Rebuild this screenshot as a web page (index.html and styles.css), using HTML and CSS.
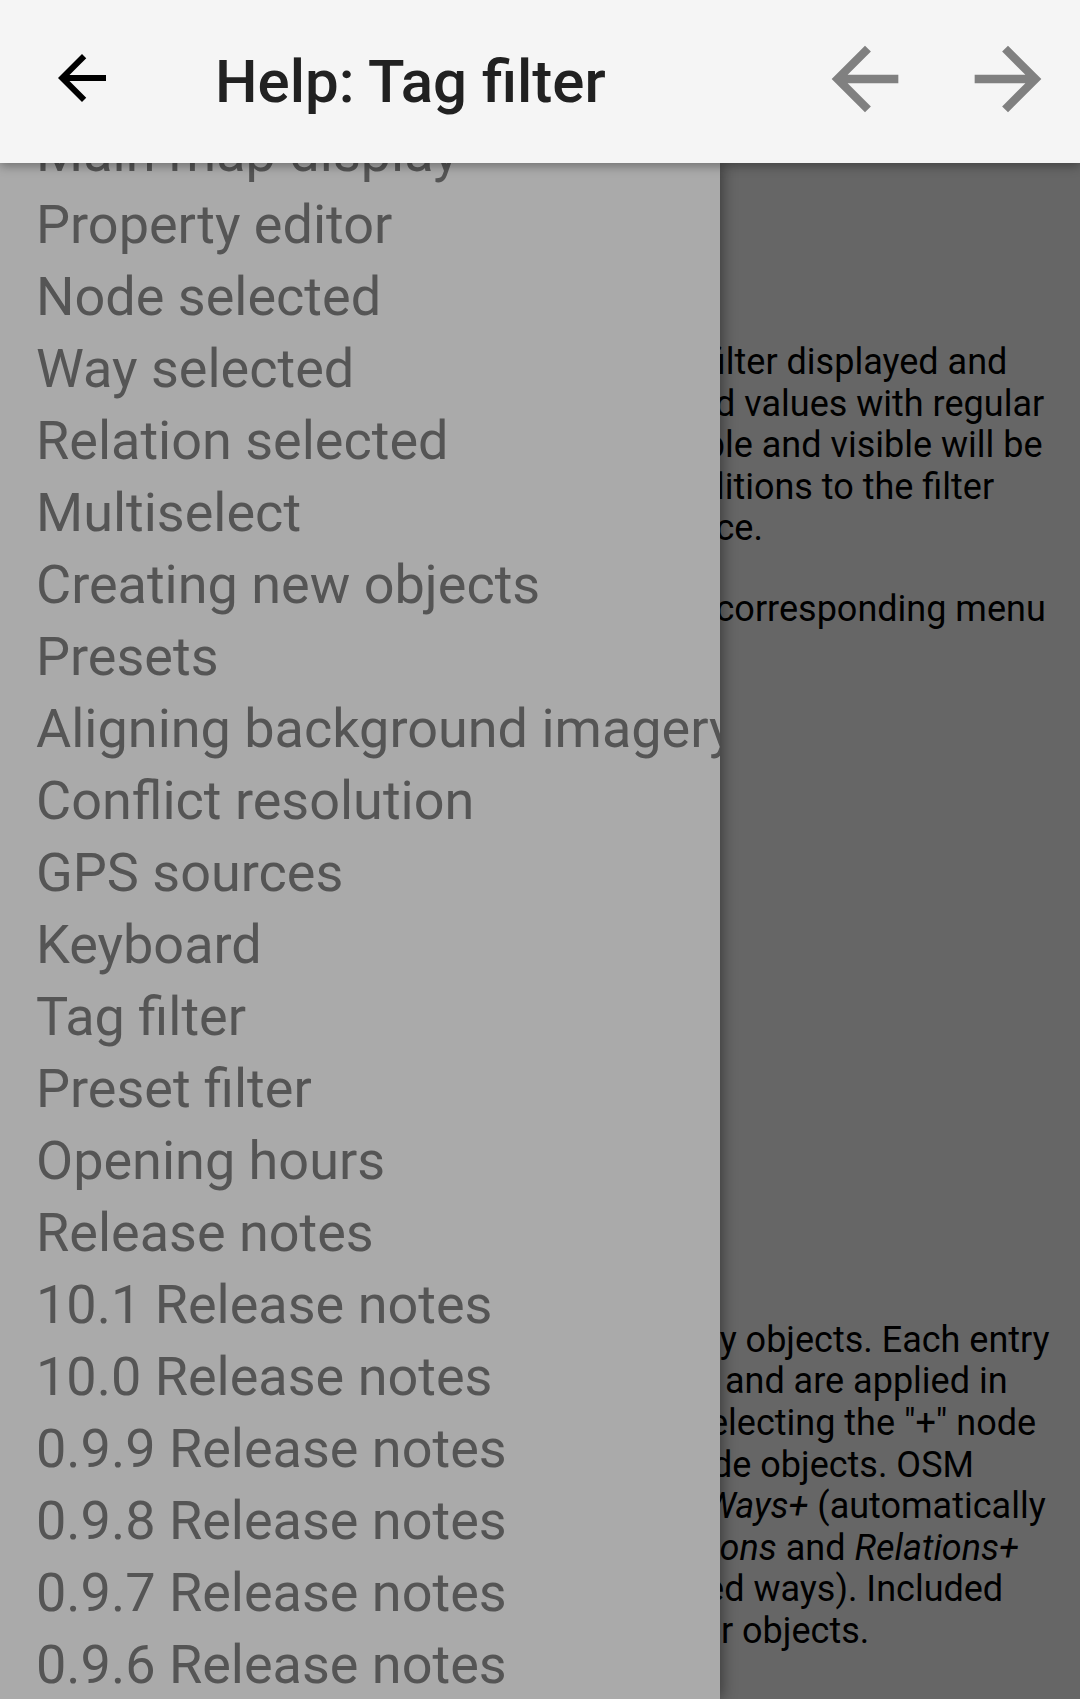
FILE: index.html
```html
<!DOCTYPE html>
<html lang="en">
<head>
<meta charset="utf-8">
<title>Help: Tag filter</title>
<link rel="stylesheet" href="styles.css">
</head>
<body>
<div class="app">
  <header class="toolbar">
    <button class="icon-btn back" aria-label="Back">
      <svg viewBox="0 0 24 24" width="72" height="72"><path d="M20 11H7.83l5.59-5.59L12 4l-8 8 8 8 1.41-1.41L7.83 13H20v-2z"/></svg>
    </button>
    <h1 class="title">Help: Tag filter</h1>
    <div class="actions">
      <button class="icon-btn nav" aria-label="Previous">
        <svg viewBox="0 0 24 24" width="100" height="100"><path d="M20 11H7.83l5.59-5.59L12 4l-8 8 8 8 1.41-1.41L7.83 13H20v-2z"/></svg>
      </button>
      <button class="icon-btn nav" aria-label="Next">
        <svg viewBox="0 0 24 24" width="100" height="100"><path d="M12 4l-1.41 1.41L16.17 11H4v2h12.17l-5.58 5.59L12 20l8-8z"/></svg>
      </button>
    </div>
  </header>

  <main class="help">
    <h2 class="help-title">Tag filter</h2>
    <p>The tag filter is a simplistic mechanism to filter displayed and<br>editable objects, via matching their keys and values with regular<br>expressions. Only objects being both editable and visible will be<br>shown and can be edited. Changes and additions to the filter<br>will be reflected in the map display all at once.</p>
    <p>The filter can be turned on and off with the corresponding menu<br>entry.</p>
    <h3 class="help-sub">Filter editor</h3>
    <ul class="short-list">
      <li>Include or exclude</li>
      <li>Object type</li>
      <li>Key expression</li>
      <li>Value expression</li>
      <li>Active toggle</li>
      <li>Delete entry</li>
      <li>Add entry</li>
      <li>Reorder entries</li>
      <li>Clear filter</li>
      <li>Save filter</li>
      <li>Load filter</li>
      <li>Close editor</li>
    </ul>
    <p>The filter entries may include, or exclude any objects. Each entry<br>matches key and value regular expressions and are applied in<br>the listed order, new entries are added by selecting the "+" node<br>icon, the type filter restricts matching to node objects. OSM<br>element types accepted are: <em>Nodes</em>, <em>Ways</em>, <em>Ways+</em> (automatically<br>including all of the nodes of the way), <em>Relations</em> and <em>Relations+</em><br>(including all its member nodes and included ways). Included<br>objects are visible, excluded ones hide other objects.</p>
    <p class="note">Note that the filter is only applied to the loaded and downloaded data.</p>
  </main>

  <div class="scrim"></div>

  <nav class="drawer">
    <ul class="topics">
      <li>Main map display</li>
      <li>Property editor</li>
      <li>Node selected</li>
      <li>Way selected</li>
      <li>Relation selected</li>
      <li>Multiselect</li>
      <li>Creating new objects</li>
      <li>Presets</li>
      <li>Aligning background imagery</li>
      <li>Conflict resolution</li>
      <li>GPS sources</li>
      <li>Keyboard</li>
      <li>Tag filter</li>
      <li>Preset filter</li>
      <li>Opening hours</li>
      <li>Release notes</li>
      <li>10.1 Release notes</li>
      <li>10.0 Release notes</li>
      <li>0.9.9 Release notes</li>
      <li>0.9.8 Release notes</li>
      <li>0.9.7 Release notes</li>
      <li>0.9.6 Release notes</li>
      <li>0.9.5 Release notes</li>
    </ul>
  </nav>
</div>
</body>
</html>
```
FILE: styles.css
```css
* { box-sizing: border-box; }

body {
  margin: 0;
  background: #ffffff;
  font-family: Roboto, "Noto Sans", "Liberation Sans", sans-serif;
}

.app {
  position: relative;
  width: 1080px;
  height: 1699px;
  overflow: hidden;
}

/* ---------- toolbar ---------- */
.toolbar {
  position: relative;
  z-index: 3;
  height: 163px;
  background: #f5f5f5;
  display: flex;
  align-items: center;
  box-shadow: 0 3px 10px rgba(0, 0, 0, 0.35);
}

.icon-btn {
  border: 0;
  padding: 0;
  margin: 0;
  background: transparent;
  display: flex;
  align-items: center;
  justify-content: center;
}

.icon-btn svg { display: block; }

.back {
  width: 72px;
  height: 72px;
  margin-left: 46px;
  margin-bottom: 7px;
}

.back svg { fill: #000000; }

.title {
  flex: 1;
  margin: 0 0 0 97px;
  font-size: 60px;
  font-weight: 500;
  color: #212121;
  white-space: nowrap;
}

.actions {
  display: flex;
  gap: 43px;
  margin-right: 22px;
  margin-bottom: 6px;
}

.nav {
  width: 100px;
  height: 100px;
}

.nav svg { fill: #808080; }

/* ---------- help content (behind the drawer) ---------- */
.help {
  padding: 40px 24px 0 29.5px;
  font-size: 36px;
  line-height: 41.6px;
  color: #000000;
  white-space: nowrap;
}

.help-title {
  margin: 0 0 75px;
  font-size: 55px;
  line-height: 64px;
  font-weight: 700;
}

.help p {
  margin: 0 0 38.7px;
}

.help p.note {
  margin-top: 46px;
}

.help-sub {
  margin: 0 0 38.7px;
  font-size: 45px;
  line-height: 54px;
  font-weight: 700;
}

.short-list {
  margin: 0 0 17.5px;
  padding-left: 60px;
}

/* ---------- scrim ---------- */
.scrim {
  position: absolute;
  inset: 0;
  z-index: 1;
  background: rgba(0, 0, 0, 0.6);
}

/* ---------- navigation drawer ---------- */
.drawer {
  position: absolute;
  z-index: 2;
  top: 163px;
  left: 0;
  bottom: 0;
  width: 720px;
  background: #aaaaaa;
  overflow: hidden;
  box-shadow: 2px 0 14px rgba(0, 0, 0, 0.45);
}

.topics {
  list-style: none;
  margin: -46.5px 0 0;
  padding: 0 0 0 36px;
  font-size: 54px;
  line-height: 72px;
  color: #555555;
  white-space: nowrap;
}
```
